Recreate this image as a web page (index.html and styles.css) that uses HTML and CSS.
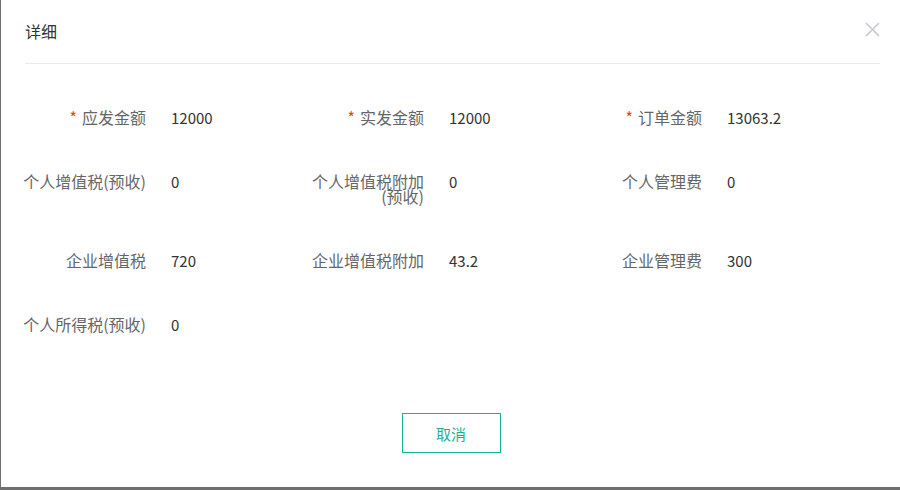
FILE: index.html
```html
<!DOCTYPE html>
<html lang="zh-CN">
<head>
  <meta charset="UTF-8">
  <title>详细</title>
  <link rel="stylesheet" href="styles.css">
</head>
<body>

<div class="modal">
  <!-- Header -->
  <div class="modal-header">
    <span class="modal-title">详细</span>
    <a class="modal-close" title="关闭">
      <svg width="15" height="15" viewBox="0 0 15 15">
        <path d="M1 1 L14 14 M14 1 L1 14" stroke="#c5c8ce" stroke-width="1.6" fill="none"/>
      </svg>
    </a>
  </div>

  <!-- Body -->
  <div class="modal-body">
    <div class="form-grid">
      <div class="form-item">
        <label class="form-label required">应发金额</label>
        <div class="form-value">12000</div>
      </div>
      <div class="form-item">
        <label class="form-label required">实发金额</label>
        <div class="form-value">12000</div>
      </div>
      <div class="form-item">
        <label class="form-label required">订单金额</label>
        <div class="form-value">13063.2</div>
      </div>

      <div class="form-item">
        <label class="form-label">个人增值税(预收)</label>
        <div class="form-value">0</div>
      </div>
      <div class="form-item">
        <label class="form-label">个人增值税附加(预收)</label>
        <div class="form-value">0</div>
      </div>
      <div class="form-item">
        <label class="form-label">个人管理费</label>
        <div class="form-value">0</div>
      </div>

      <div class="form-item">
        <label class="form-label">企业增值税</label>
        <div class="form-value">720</div>
      </div>
      <div class="form-item">
        <label class="form-label">企业增值税附加</label>
        <div class="form-value">43.2</div>
      </div>
      <div class="form-item">
        <label class="form-label">企业管理费</label>
        <div class="form-value">300</div>
      </div>

      <div class="form-item">
        <label class="form-label">个人所得税(预收)</label>
        <div class="form-value">0</div>
      </div>
    </div>
  </div>

  <!-- Footer -->
  <div class="modal-footer">
    <button class="btn-cancel">取消</button>
  </div>
</div>

</body>
</html>
```

FILE: styles.css
```css
html, body {
  height: 100%;
}
body {
  margin: 0;
  background: #6f6f6f;
  font-family: "Microsoft YaHei", "Noto Sans CJK SC", "Liberation Sans", sans-serif;
  font-size: 15px;
  color: #333;
}
.modal {
  margin-left: 1px;
  height: 487px;
  background: #fff;
  display: flex;
  flex-direction: column;
}
.modal-header {
  margin: 0 20px 0 24px;
  height: 64px;
  border-bottom: 1px solid #e8eaec;
  display: flex;
  align-items: center;
  justify-content: space-between;
  box-sizing: border-box;
}
.modal-title {
  font-size: 16px;
  color: #333;
  padding-bottom: 1px;
}
.modal-close {
  display: flex;
  cursor: pointer;
  margin-bottom: 5px;
}
.modal-body {
  padding: 22px 0 0 17px;
  flex: 1;
}
.form-grid {
  display: grid;
  grid-template-columns: repeat(3, 278px);
}
.form-item {
  display: flex;
  align-items: flex-start;
}
.form-label {
  width: 128px;
  padding: 24px 12px 25px 0;
  text-align: right;
  font-size: 16px;
  line-height: 15px;
  color: #666;
  flex-shrink: 0;
}
.form-label.required::before {
  content: "*";
  color: #ed4014;
  margin-right: 5px;
}
.form-value {
  padding: 24px 0 0 13px;
  line-height: 15px;
  color: #333;
}
.modal-footer {
  display: flex;
  justify-content: center;
  padding-bottom: 34px;
}
.btn-cancel {
  width: 99px;
  height: 40px;
  margin-left: 1px;
  background: #fff;
  border: 1px solid #19b394;
  border-radius: 0;
  color: #19b394;
  font-family: inherit;
  font-size: 15px;
  cursor: pointer;
}
.btn-cancel:hover {
  background: #f0fbf8;
}
```
